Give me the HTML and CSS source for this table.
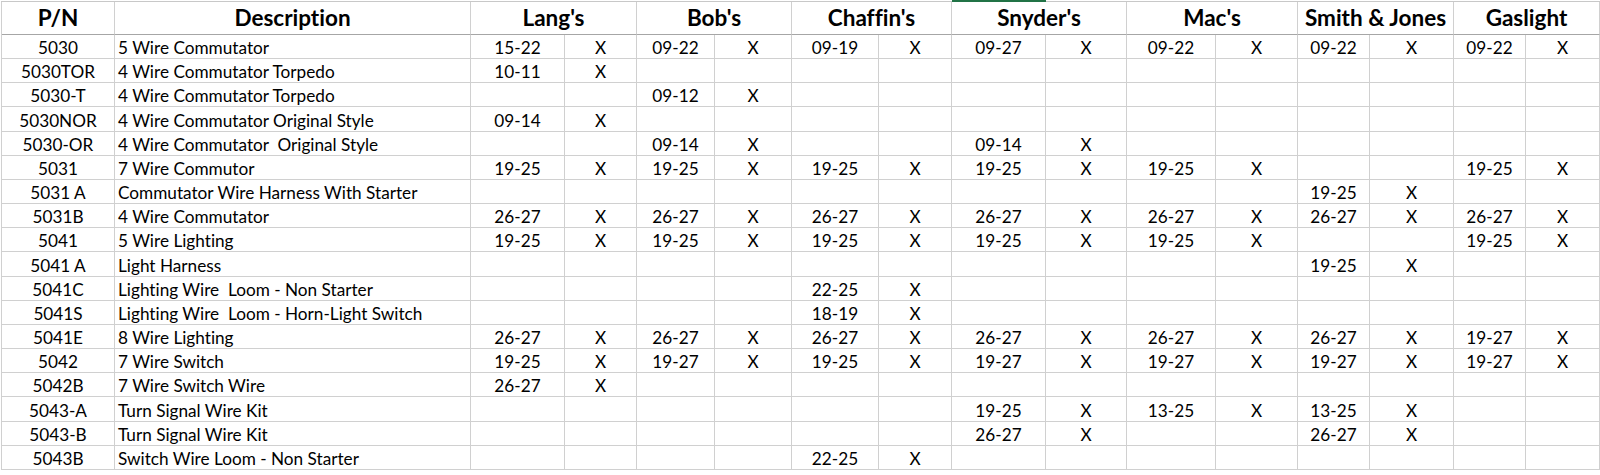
FILE: index.html
```html
<!DOCTYPE html>
<html lang="en">
<head>
<meta charset="utf-8">
<title>Wire Harness Cross Reference</title>
<link rel="stylesheet" href="styles.css">
</head>
<body>
<div class="sheet">
  <div class="topline"><span class="tl-a"></span><span class="tl-sel"></span><span class="tl-b"></span></div>
  <div class="row head">
    <div class="c pn">P/N</div><div class="c hd">Description</div>
    <div class="c shop">Lang's</div><div class="c shop">Bob's</div><div class="c shop">Chaffin's</div><div class="c shop">Snyder's</div><div class="c shop">Mac's</div><div class="c shop">Smith &amp; Jones</div><div class="c shop">Gaslight</div>
  </div>
  <div class="row">
    <div class="c pn">5030</div><div class="c desc">5 Wire Commutator</div>
    <div class="c">15-22</div><div class="c">X</div><div class="c">09-22</div><div class="c">X</div><div class="c">09-19</div><div class="c">X</div><div class="c">09-27</div><div class="c">X</div><div class="c">09-22</div><div class="c">X</div><div class="c">09-22</div><div class="c">X</div><div class="c">09-22</div><div class="c">X</div>
  </div>
  <div class="row">
    <div class="c pn">5030TOR</div><div class="c desc">4 Wire Commutator Torpedo</div>
    <div class="c">10-11</div><div class="c">X</div><div class="c"></div><div class="c"></div><div class="c"></div><div class="c"></div><div class="c"></div><div class="c"></div><div class="c"></div><div class="c"></div><div class="c"></div><div class="c"></div><div class="c"></div><div class="c"></div>
  </div>
  <div class="row">
    <div class="c pn">5030-T</div><div class="c desc">4 Wire Commutator Torpedo</div>
    <div class="c"></div><div class="c"></div><div class="c">09-12</div><div class="c">X</div><div class="c"></div><div class="c"></div><div class="c"></div><div class="c"></div><div class="c"></div><div class="c"></div><div class="c"></div><div class="c"></div><div class="c"></div><div class="c"></div>
  </div>
  <div class="row">
    <div class="c pn">5030NOR</div><div class="c desc">4 Wire Commutator Original Style</div>
    <div class="c">09-14</div><div class="c">X</div><div class="c"></div><div class="c"></div><div class="c"></div><div class="c"></div><div class="c"></div><div class="c"></div><div class="c"></div><div class="c"></div><div class="c"></div><div class="c"></div><div class="c"></div><div class="c"></div>
  </div>
  <div class="row">
    <div class="c pn">5030-OR</div><div class="c desc">4 Wire Commutator &nbsp;Original Style</div>
    <div class="c"></div><div class="c"></div><div class="c">09-14</div><div class="c">X</div><div class="c"></div><div class="c"></div><div class="c">09-14</div><div class="c">X</div><div class="c"></div><div class="c"></div><div class="c"></div><div class="c"></div><div class="c"></div><div class="c"></div>
  </div>
  <div class="row">
    <div class="c pn">5031</div><div class="c desc">7 Wire Commutor</div>
    <div class="c">19-25</div><div class="c">X</div><div class="c">19-25</div><div class="c">X</div><div class="c">19-25</div><div class="c">X</div><div class="c">19-25</div><div class="c">X</div><div class="c">19-25</div><div class="c">X</div><div class="c"></div><div class="c"></div><div class="c">19-25</div><div class="c">X</div>
  </div>
  <div class="row">
    <div class="c pn">5031 A</div><div class="c desc">Commutator Wire Harness With Starter</div>
    <div class="c"></div><div class="c"></div><div class="c"></div><div class="c"></div><div class="c"></div><div class="c"></div><div class="c"></div><div class="c"></div><div class="c"></div><div class="c"></div><div class="c">19-25</div><div class="c">X</div><div class="c"></div><div class="c"></div>
  </div>
  <div class="row">
    <div class="c pn">5031B</div><div class="c desc">4 Wire Commutator</div>
    <div class="c">26-27</div><div class="c">X</div><div class="c">26-27</div><div class="c">X</div><div class="c">26-27</div><div class="c">X</div><div class="c">26-27</div><div class="c">X</div><div class="c">26-27</div><div class="c">X</div><div class="c">26-27</div><div class="c">X</div><div class="c">26-27</div><div class="c">X</div>
  </div>
  <div class="row">
    <div class="c pn">5041</div><div class="c desc">5 Wire Lighting</div>
    <div class="c">19-25</div><div class="c">X</div><div class="c">19-25</div><div class="c">X</div><div class="c">19-25</div><div class="c">X</div><div class="c">19-25</div><div class="c">X</div><div class="c">19-25</div><div class="c">X</div><div class="c"></div><div class="c"></div><div class="c">19-25</div><div class="c">X</div>
  </div>
  <div class="row">
    <div class="c pn">5041 A</div><div class="c desc">Light Harness</div>
    <div class="c"></div><div class="c"></div><div class="c"></div><div class="c"></div><div class="c"></div><div class="c"></div><div class="c"></div><div class="c"></div><div class="c"></div><div class="c"></div><div class="c">19-25</div><div class="c">X</div><div class="c"></div><div class="c"></div>
  </div>
  <div class="row">
    <div class="c pn">5041C</div><div class="c desc">Lighting Wire &nbsp;Loom - Non Starter</div>
    <div class="c"></div><div class="c"></div><div class="c"></div><div class="c"></div><div class="c">22-25</div><div class="c">X</div><div class="c"></div><div class="c"></div><div class="c"></div><div class="c"></div><div class="c"></div><div class="c"></div><div class="c"></div><div class="c"></div>
  </div>
  <div class="row">
    <div class="c pn">5041S</div><div class="c desc">Lighting Wire &nbsp;Loom - Horn-Light Switch</div>
    <div class="c"></div><div class="c"></div><div class="c"></div><div class="c"></div><div class="c">18-19</div><div class="c">X</div><div class="c"></div><div class="c"></div><div class="c"></div><div class="c"></div><div class="c"></div><div class="c"></div><div class="c"></div><div class="c"></div>
  </div>
  <div class="row">
    <div class="c pn">5041E</div><div class="c desc">8 Wire Lighting</div>
    <div class="c">26-27</div><div class="c">X</div><div class="c">26-27</div><div class="c">X</div><div class="c">26-27</div><div class="c">X</div><div class="c">26-27</div><div class="c">X</div><div class="c">26-27</div><div class="c">X</div><div class="c">26-27</div><div class="c">X</div><div class="c">19-27</div><div class="c">X</div>
  </div>
  <div class="row">
    <div class="c pn">5042</div><div class="c desc">7 Wire Switch</div>
    <div class="c">19-25</div><div class="c">X</div><div class="c">19-27</div><div class="c">X</div><div class="c">19-25</div><div class="c">X</div><div class="c">19-27</div><div class="c">X</div><div class="c">19-27</div><div class="c">X</div><div class="c">19-27</div><div class="c">X</div><div class="c">19-27</div><div class="c">X</div>
  </div>
  <div class="row">
    <div class="c pn">5042B</div><div class="c desc">7 Wire Switch Wire</div>
    <div class="c">26-27</div><div class="c">X</div><div class="c"></div><div class="c"></div><div class="c"></div><div class="c"></div><div class="c"></div><div class="c"></div><div class="c"></div><div class="c"></div><div class="c"></div><div class="c"></div><div class="c"></div><div class="c"></div>
  </div>
  <div class="row">
    <div class="c pn">5043-A</div><div class="c desc">Turn Signal Wire Kit</div>
    <div class="c"></div><div class="c"></div><div class="c"></div><div class="c"></div><div class="c"></div><div class="c"></div><div class="c">19-25</div><div class="c">X</div><div class="c">13-25</div><div class="c">X</div><div class="c">13-25</div><div class="c">X</div><div class="c"></div><div class="c"></div>
  </div>
  <div class="row">
    <div class="c pn">5043-B</div><div class="c desc">Turn Signal Wire Kit</div>
    <div class="c"></div><div class="c"></div><div class="c"></div><div class="c"></div><div class="c"></div><div class="c"></div><div class="c">26-27</div><div class="c">X</div><div class="c"></div><div class="c"></div><div class="c">26-27</div><div class="c">X</div><div class="c"></div><div class="c"></div>
  </div>
  <div class="row">
    <div class="c pn">5043B</div><div class="c desc">Switch Wire Loom - Non Starter</div>
    <div class="c"></div><div class="c"></div><div class="c"></div><div class="c"></div><div class="c">22-25</div><div class="c">X</div><div class="c"></div><div class="c"></div><div class="c"></div><div class="c"></div><div class="c"></div><div class="c"></div><div class="c"></div><div class="c"></div>
  </div>
</div>
</body>
</html>
```

FILE: styles.css
```css
* { box-sizing: border-box; }
html, body { margin: 0; padding: 0; background: #ffffff; }
body {
  font-family: Lato, "Open Sans", sans-serif;
  color: #000000;
  overflow: hidden;
  font-variant-ligatures: none;
}
.sheet {
  --cols: 113px 356px 94px 72px 78px 77px 87px 73px 94px 81px 89px 82px 72px 84px 72px 74px;
  margin-left: 1px;
  width: 1599px;
}
.topline {
  display: flex;
  height: 2px;
}
.topline span { height: 2px; border-bottom: 1px solid #c8c8c8; }
.tl-a { width: 951px; }
.tl-sel { width: 94px; background: #217346; border-bottom-color: #217346 !important; }
.tl-b { flex: 1; }
.row {
  display: grid;
  grid-template-columns: var(--cols);
  height: 24.17px;
  border-left: 1px solid #d0d0d0;
}
.row.head {
  height: 33px;
}
.c {
  display: flex;
  align-items: flex-end;
  justify-content: center;
  border-right: 1px solid #d0d0d0;
  border-bottom: 1px solid #d0d0d0;
  font-size: 17.2px;
  line-height: 17px;
  padding-bottom: 2px;
  white-space: pre;
  overflow: hidden;
}
.c.desc {
  justify-content: flex-start;
  padding-left: 3px;
}
.head .c {
  font-size: 22.5px;
  line-height: 22px;
  font-weight: 700;
  padding-bottom: 5px;
  border-bottom-color: #a6a6a6;
}
.head .shop { grid-column: span 2; }
```
